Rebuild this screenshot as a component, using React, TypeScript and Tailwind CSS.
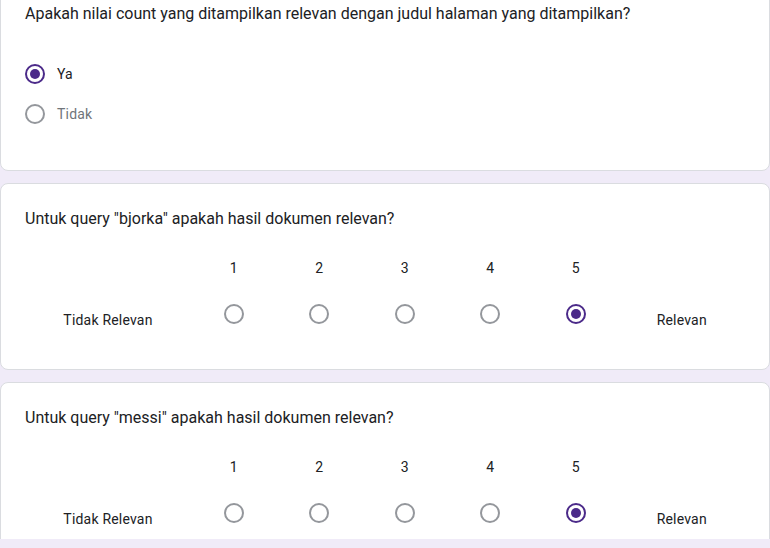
import React from "react";

function Radio({ checked }: { checked?: boolean }) {
  return checked ? (
    <span className="flex size-5 shrink-0 items-center justify-center rounded-full border-2 border-[#4b2a89]">
      <span className="size-2.5 rounded-full bg-[#4b2a89]" />
    </span>
  ) : (
    <span className="block size-5 shrink-0 rounded-full border-2 border-[#94979c]" />
  );
}

function ScaleQuestion({ query }: { query: string }) {
  return (
    <>
      <p className="text-base leading-6 text-[#202124]">
        Untuk query "{query}" apakah hasil dokumen relevan?
      </p>
      <div className="mt-[27px] grid grid-cols-[166px_repeat(5,85.5px)_1fr] text-sm tracking-[0.2px] text-[#202124]">
        <div />
        {[1, 2, 3, 4, 5].map((n) => (
          <div key={n} className="flex h-5 items-center justify-center leading-5">
            {n}
          </div>
        ))}
        <div />
        <div className="mt-3 flex h-12 items-center justify-center pt-3 leading-5">Tidak Relevan</div>
        {[1, 2, 3, 4, 5].map((n) => (
          <div key={n} className="mt-3 flex h-12 items-center justify-center">
            <Radio checked={n === 5} />
          </div>
        ))}
        <div className="mt-3 flex h-12 items-center justify-center pt-3 leading-5">Relevan</div>
      </div>
    </>
  );
}

export default function App() {
  return (
    <div
      className="flex h-[548px] w-[770px] flex-col overflow-hidden bg-[#f0ebf8]"
      style={{ fontFamily: "Roboto, 'Noto Sans', sans-serif" }}
    >
      {/* question 1 - top cut off */}
      <div className="-mt-[23px] rounded-lg border border-[#dadce0] bg-white px-6 pt-6 pb-[36px]">
        <p className="text-base leading-6 text-[#202124]">
          Apakah nilai count yang ditampilkan relevan dengan judul halaman yang ditampilkan?
        </p>
        <div className="mt-[28px] flex flex-col tracking-[0.2px]">
          <label className="flex h-10 items-center gap-3 text-sm text-[#202124]">
            <Radio checked />
            Ya
          </label>
          <label className="flex h-10 items-center gap-3 text-sm text-[#70757a]">
            <Radio />
            Tidak
          </label>
        </div>
      </div>

      <div className="mt-3 rounded-lg border border-[#dadce0] bg-white px-6 pt-[23px] pb-[31px]">
        <ScaleQuestion query="bjorka" />
      </div>

      <div className="mt-3 h-[157px] shrink-0 overflow-hidden">
        <div className="rounded-t-lg border border-[#dadce0] bg-white px-6 pt-[23px] pb-[29px]">
          <ScaleQuestion query="messi" />
        </div>
      </div>
    </div>
  );
}
